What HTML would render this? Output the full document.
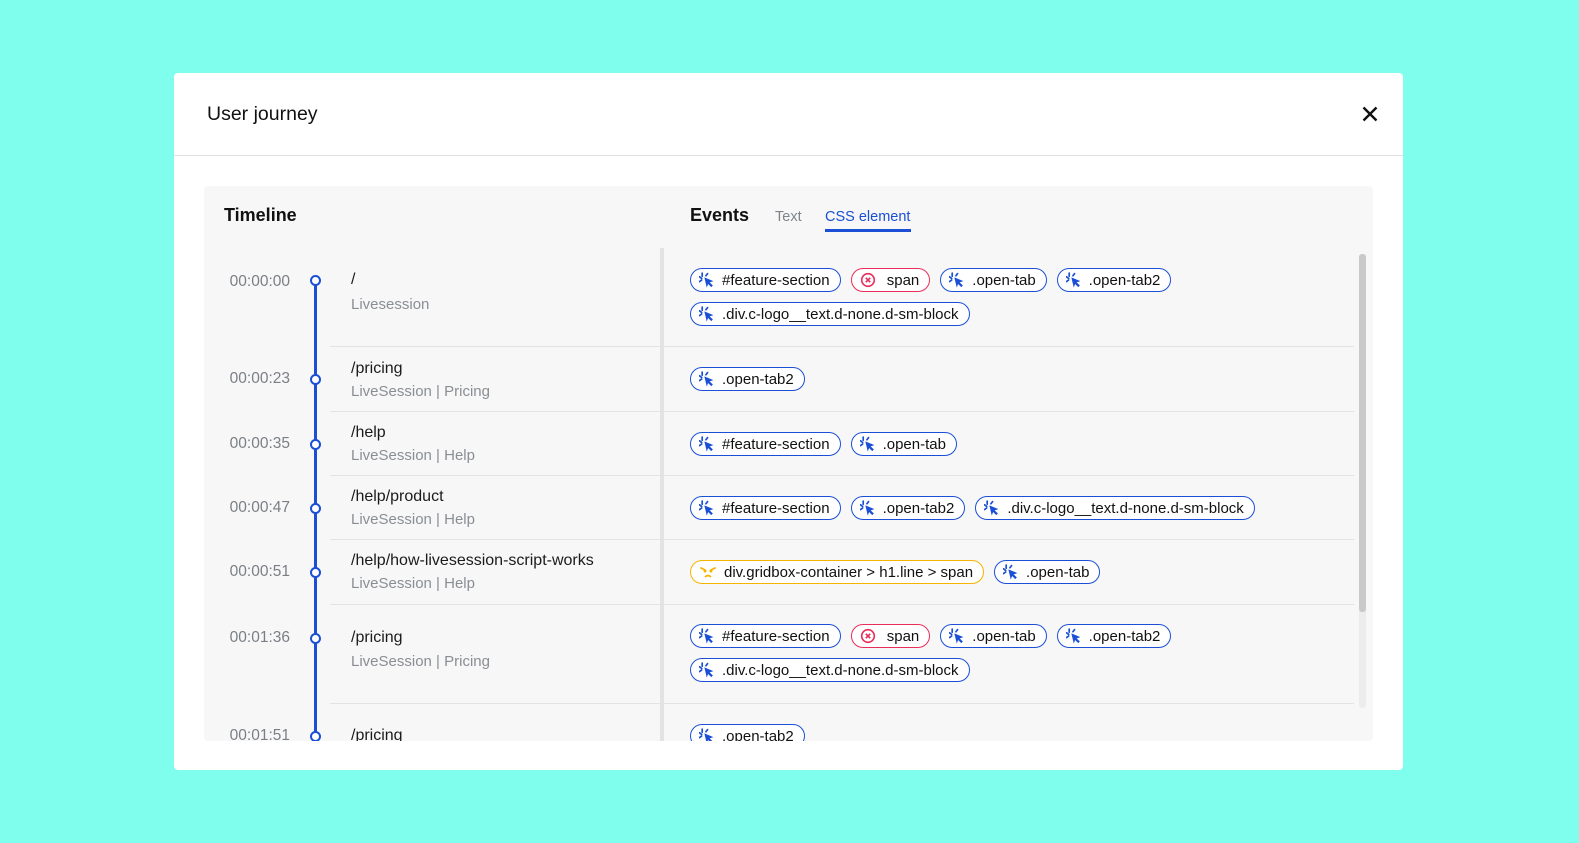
<!DOCTYPE html>
<html><head><meta charset="utf-8"><style>
*{box-sizing:border-box;margin:0;padding:0}
body{width:1579px;height:843px;background:#7ffded;font-family:"Liberation Sans",Arial,sans-serif;position:relative;overflow:hidden}
.modal{position:absolute;left:174px;top:73px;width:1229px;height:697px;background:#fff;border-radius:4px}
.hdr{position:absolute;left:0;top:0;width:100%;height:83px;border-bottom:1px solid #e2e2e2}
.hdr h1{position:absolute;left:33px;top:30px;font-size:19.5px;font-weight:normal;color:#111;line-height:22px}
.close{position:absolute;left:1188px;top:33px}
.panel{position:absolute;left:30px;top:113px;width:1169px;height:555px;background:#f7f7f7;overflow:hidden;border-radius:4px}
.t{position:absolute;font-size:18px;font-weight:700;color:#111;line-height:20px}
.tab{position:absolute;font-size:14.5px;line-height:18px}
.vdiv{position:absolute;left:456px;top:62px;width:4px;height:500px;background:#e3e3e3}
.sbar{position:absolute;left:1155px;top:68px;width:7px;height:454px;background:#ececec;border-radius:3px}
.thumb{position:absolute;left:1155px;top:68px;width:7px;height:358px;background:#c9c9c9;border-radius:3px}
.vline{position:absolute;left:110px;top:94px;width:3px;height:470px;background:#1a4fd6}
.dot{position:absolute;left:106px;width:11px;height:11px;border:2.5px solid #1a4fd6;border-radius:50%;background:#fff;margin-top:-5.5px}
.time{position:absolute;left:0;width:86px;text-align:right;font-size:15.5px;color:#7b7f84;line-height:20px;margin-top:-10px}
.path{position:absolute;left:147px;font-size:16px;color:#1b1b1b;line-height:20px;margin-top:-10px}
.sub{position:absolute;left:147px;font-size:15px;color:#8a8e93;line-height:20px;margin-top:-10px}
.sep{position:absolute;left:126px;width:1024px;height:1px;background:#e3e3e3}
.chips{position:absolute;left:486px;width:660px;display:flex;flex-wrap:wrap;gap:10px 10px}
.c{display:inline-flex;align-items:center;height:24px;border:1.5px solid #1a4fd6;border-radius:12px;padding:0 10px 0 8px;font-size:15px;color:#111;background:#fff;white-space:nowrap}
.c svg{margin-right:7px}
.c.r{border-color:#ea2c5a}
.c.y{border-color:#f5b400}
</style></head><body>
<div class="modal">
<div class="hdr"><h1>User journey</h1>
<svg class="close" width="16" height="16" viewBox="0 0 16 16"><path d="M1.5 1.5L14.5 14.5M14.5 1.5L1.5 14.5" stroke="#111" stroke-width="2.4"/></svg></div>
<div class="panel">
<div class="t" style="left:20px;top:19px">Timeline</div>
<div class="t" style="left:486px;top:19px">Events</div>
<div class="tab" style="left:571px;top:22px;color:#80858a">Text</div>
<div class="tab" style="left:621px;top:22px;color:#1a4fd6">CSS element</div>
<div style="position:absolute;left:621px;top:43px;width:86px;height:2.5px;background:#1a4fd6"></div>
<div class="vdiv"></div><div class="sbar"></div><div class="thumb"></div>
<div class="vline"></div>

<div class="dot" style="top:94px"></div>
<div class="time" style="top:96px">00:00:00</div>
<div class="path" style="top:94px">/</div><div class="sub" style="top:119px">Livesession</div>
<div class="sep" style="top:160px"></div>

<div class="dot" style="top:193px"></div>
<div class="time" style="top:193px">00:00:23</div>
<div class="path" style="top:183px">/pricing</div><div class="sub" style="top:206px">LiveSession | Pricing</div>
<div class="sep" style="top:225px"></div>

<div class="dot" style="top:258px"></div>
<div class="time" style="top:258px">00:00:35</div>
<div class="path" style="top:247px">/help</div><div class="sub" style="top:270px">LiveSession | Help</div>
<div class="sep" style="top:289px"></div>

<div class="dot" style="top:322px"></div>
<div class="time" style="top:322px">00:00:47</div>
<div class="path" style="top:311px">/help/product</div><div class="sub" style="top:334px">LiveSession | Help</div>
<div class="sep" style="top:353px"></div>

<div class="dot" style="top:386px"></div>
<div class="time" style="top:386px">00:00:51</div>
<div class="path" style="top:375px">/help/how-livesession-script-works</div><div class="sub" style="top:398px">LiveSession | Help</div>
<div class="sep" style="top:418px"></div>

<div class="dot" style="top:452px"></div>
<div class="time" style="top:452px">00:01:36</div>
<div class="path" style="top:452px">/pricing</div><div class="sub" style="top:476px">LiveSession | Pricing</div>
<div class="sep" style="top:517px"></div>

<div class="dot" style="top:550px"></div>
<div class="time" style="top:550px">00:01:51</div>
<div class="path" style="top:550px">/pricing</div>

<svg width="0" height="0" style="position:absolute"><defs>
<g id="clk"><path d="M3 1v3M0.5 4.5l2 1.5M0.5 9l2-1.5M8 1.5l-1.5 2" stroke="#1a4fd6" stroke-width="1.6" stroke-linecap="round"/><path d="M5 5l8.5 3.5-3.5 1.2 3 3-1.5 1.5-3-3-1.2 3.5z" fill="#1a4fd6"/></g>
</defs></svg>

<div class="chips" style="top:82px">
<span class="c"><svg width="16" height="16" viewBox="0 0 15 15"><use href="#clk"/></svg>#feature-section</span>
<span class="c r"><svg width="16" height="16" viewBox="0 0 16 16"><circle cx="8" cy="8" r="6.3" fill="none" stroke="#ea2c5a" stroke-width="1.6"/><path d="M5.8 5.8l4.4 4.4M10.2 5.8l-4.4 4.4" stroke="#ea2c5a" stroke-width="1.6"/></svg>&nbsp;span</span>
<span class="c"><svg width="16" height="16" viewBox="0 0 15 15"><use href="#clk"/></svg>.open-tab</span>
<span class="c"><svg width="16" height="16" viewBox="0 0 15 15"><use href="#clk"/></svg>.open-tab2</span>
<span class="c"><svg width="16" height="16" viewBox="0 0 15 15"><use href="#clk"/></svg>.div.c-logo__text.d-none.d-sm-block</span>
</div>
<div class="chips" style="top:181px"><span class="c"><svg width="16" height="16" viewBox="0 0 15 15"><use href="#clk"/></svg>.open-tab2</span></div>
<div class="chips" style="top:246px"><span class="c"><svg width="16" height="16" viewBox="0 0 15 15"><use href="#clk"/></svg>#feature-section</span><span class="c"><svg width="16" height="16" viewBox="0 0 15 15"><use href="#clk"/></svg>.open-tab</span></div>
<div class="chips" style="top:310px;width:700px"><span class="c"><svg width="16" height="16" viewBox="0 0 15 15"><use href="#clk"/></svg>#feature-section</span><span class="c"><svg width="16" height="16" viewBox="0 0 15 15"><use href="#clk"/></svg>.open-tab2</span><span class="c"><svg width="16" height="16" viewBox="0 0 15 15"><use href="#clk"/></svg>.div.c-logo__text.d-none.d-sm-block</span></div>
<div class="chips" style="top:374px"><span class="c y"><svg width="18" height="14" viewBox="0 0 18 14"><path d="M2 3l4 2M16 3l-4 2" stroke="#f5b400" stroke-width="1.8" stroke-linecap="round"/><circle cx="6" cy="6" r="1.5" fill="#f5b400"/><circle cx="12" cy="6" r="1.5" fill="#f5b400"/><path d="M6 12q3-3 6 0" stroke="#f5b400" stroke-width="1.8" fill="none"/></svg>div.gridbox-container &gt; h1.line &gt; span</span><span class="c"><svg width="16" height="16" viewBox="0 0 15 15"><use href="#clk"/></svg>.open-tab</span></div>
<div class="chips" style="top:438px">
<span class="c"><svg width="16" height="16" viewBox="0 0 15 15"><use href="#clk"/></svg>#feature-section</span>
<span class="c r"><svg width="16" height="16" viewBox="0 0 16 16"><circle cx="8" cy="8" r="6.3" fill="none" stroke="#ea2c5a" stroke-width="1.6"/><path d="M5.8 5.8l4.4 4.4M10.2 5.8l-4.4 4.4" stroke="#ea2c5a" stroke-width="1.6"/></svg>&nbsp;span</span>
<span class="c"><svg width="16" height="16" viewBox="0 0 15 15"><use href="#clk"/></svg>.open-tab</span>
<span class="c"><svg width="16" height="16" viewBox="0 0 15 15"><use href="#clk"/></svg>.open-tab2</span>
<span class="c"><svg width="16" height="16" viewBox="0 0 15 15"><use href="#clk"/></svg>.div.c-logo__text.d-none.d-sm-block</span>
</div>
<div class="chips" style="top:538px"><span class="c"><svg width="16" height="16" viewBox="0 0 15 15"><use href="#clk"/></svg>.open-tab2</span></div>
</div>
</div>
</body></html>
